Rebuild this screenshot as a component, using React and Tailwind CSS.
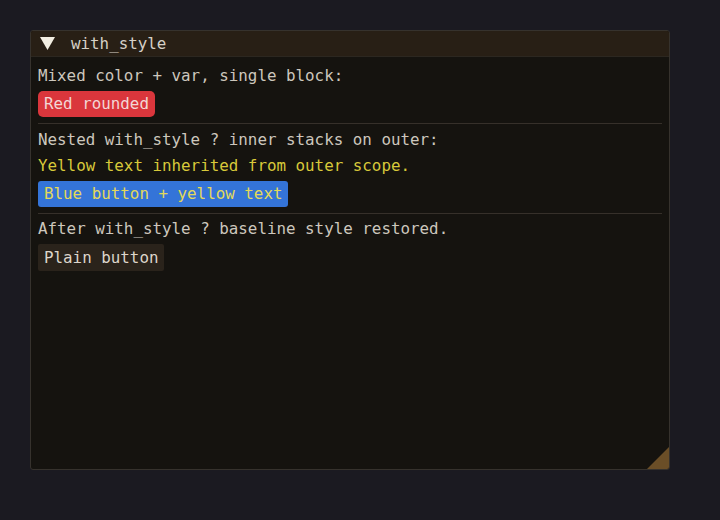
import React from "react";

const mono = { fontFamily: '"DejaVu Sans Mono", "Liberation Mono", monospace' };

const Separator = () => <div className="mt-[6px] h-px w-full bg-[#36302a]" />;

export default function App() {
  return (
    <div className="w-[720px] h-[520px] bg-[#1b1a21] pt-[30px] pl-[30px]" style={mono}>
      <div className="relative w-[640px] h-[440px] rounded-[3px] border border-[#36322d] bg-[#15130f] overflow-hidden">
        {/* title bar */}
        <div className="flex items-center h-[26px] bg-[#281f15] border-b border-[#2c2720] pl-[9px] text-[15.85px] text-[#d6d0c6]">
          <svg width="15" height="13" viewBox="0 0 15 13" className="shrink-0">
            <polygon points="0,0 15,0 7.5,13" fill="#f2eee2" />
          </svg>
          <span className="ml-[16px] leading-[18px]">with_style</span>
        </div>

        <div className="flex flex-col items-start px-[7px] pt-[10px] text-[15.85px] leading-[18px] text-[#cdc7bd]">
          <p className="whitespace-pre">Mixed color + var, single block:</p>
          <button className="mt-[6px] h-[26px] px-[6px] rounded-[5px] bg-[#da363c] text-[#f3d7d5] whitespace-pre">
            Red rounded
          </button>
          <Separator />
          <p className="mt-[7px] whitespace-pre">Nested with_style ? inner stacks on outer:</p>
          <p className="mt-[8px] whitespace-pre text-[#d8c93a]">Yellow text inherited from outer scope.</p>
          <button className="mt-[6px] h-[26px] px-[6px] rounded-[3px] bg-[#3474d8] text-[#e3d95a] whitespace-pre">
            Blue button + yellow text
          </button>
          <Separator />
          <p className="mt-[6px] whitespace-pre">After with_style ? baseline style restored.</p>
          <button className="mt-[6px] h-[27px] px-[6px] rounded-[2px] bg-[#2a231b] text-[#ddd6cb] whitespace-pre">
            Plain button
          </button>
        </div>

        {/* resize grip */}
        <svg width="22" height="22" viewBox="0 0 22 22" className="absolute right-0 bottom-0">
          <polygon points="22,0 22,22 0,22" fill="#6a4e27" />
        </svg>
      </div>
    </div>
  );
}
